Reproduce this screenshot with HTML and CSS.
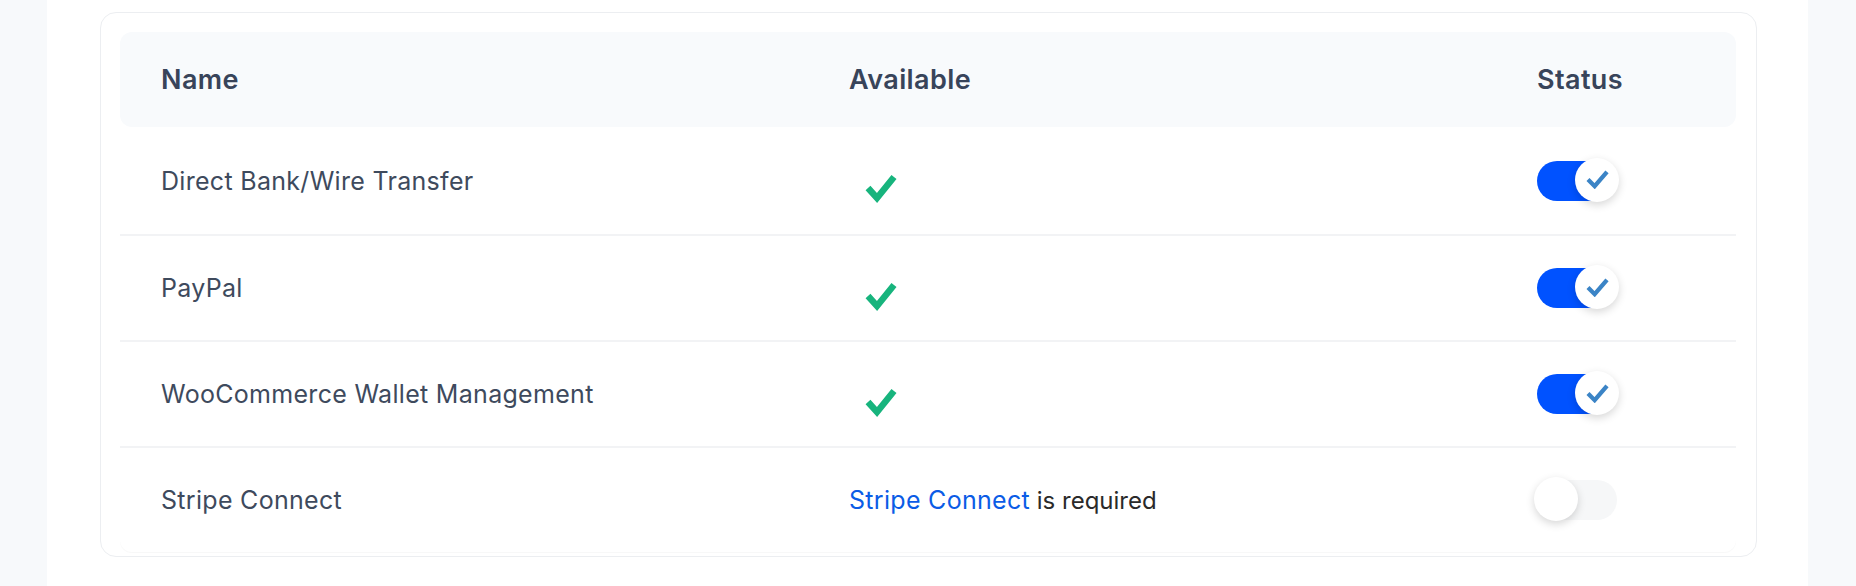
FILE: index.html
```html
<!DOCTYPE html>
<html>
<head>
<meta charset="utf-8">
<link rel="stylesheet" href="styles.css">
</head>
<body>
<div class="page">
  <aside class="strip"></aside>
  <main class="main">
    <section class="card">
      <div class="table">
        <div class="row head">
          <div class="cell">Name</div>
          <div class="cell">Available</div>
          <div class="cell">Status</div>
        </div>
        <div class="row">
          <div class="cell name">Direct Bank/Wire Transfer</div>
          <div class="cell"><svg class="ok" viewBox="0 0 32 30" width="32" height="30"><polyline points="3,14 12,24 29,3" fill="none" stroke="#17b47d" stroke-width="6.5" stroke-linejoin="miter"/></svg></div>
          <div class="cell"><span class="switch on"><span class="knob"><svg viewBox="0 0 24 20" width="23" height="19"><polyline points="2,10 9,17 22,2" fill="none" stroke="#3b84c6" stroke-width="4.5"/></svg></span></span></div>
        </div>
        <div class="row">
          <div class="cell name">PayPal</div>
          <div class="cell"><svg class="ok" viewBox="0 0 32 30" width="32" height="30"><polyline points="3,14 12,24 29,3" fill="none" stroke="#17b47d" stroke-width="6.5" stroke-linejoin="miter"/></svg></div>
          <div class="cell"><span class="switch on"><span class="knob"><svg viewBox="0 0 24 20" width="23" height="19"><polyline points="2,10 9,17 22,2" fill="none" stroke="#3b84c6" stroke-width="4.5"/></svg></span></span></div>
        </div>
        <div class="row">
          <div class="cell name">WooCommerce Wallet Management</div>
          <div class="cell"><svg class="ok" viewBox="0 0 32 30" width="32" height="30"><polyline points="3,14 12,24 29,3" fill="none" stroke="#17b47d" stroke-width="6.5" stroke-linejoin="miter"/></svg></div>
          <div class="cell"><span class="switch on"><span class="knob"><svg viewBox="0 0 24 20" width="23" height="19"><polyline points="2,10 9,17 22,2" fill="none" stroke="#3b84c6" stroke-width="4.5"/></svg></span></span></div>
        </div>
        <div class="row">
          <div class="cell name">Stripe Connect</div>
          <div class="cell req"><a class="link" href="#">Stripe Connect</a><span class="note"> is required</span></div>
          <div class="cell"><span class="switch off"><span class="knob"></span></span></div>
        </div>
      </div>
    </section>
  </main>
  <aside class="strip"></aside>
</div>
</body>
</html>
```
FILE: styles.css
```css
* { box-sizing: border-box; }
html, body { margin: 0; padding: 0; background: #ffffff; }
body { font-family: Inter, "Noto Sans", sans-serif; color: #3b4659; }

.page { display: flex; width: 1856px; height: 586px; }
.strip { width: 47px; flex: none; background: #f7f9fb; }
.strip:last-child { width: 48px; }
.main { flex: 1; padding: 12px 51px 0 53px; }

.card {
  border: 1px solid #eceef1;
  border-radius: 16px;
  padding: 19px 20px 0 19px;
  height: 545px;
}
.table {
  border-radius: 12px;
  box-shadow: 0 1px 1px rgba(0,0,0,0.03);
}
.row {
  display: grid;
  grid-template-columns: 688px 688px 1fr;
  padding-left: 41px;
  align-items: center;
  height: 106px;
  border-top: 2px solid #f2f3f5;
  font-size: 25px;
  letter-spacing: 0.3px;
}
.row.head {
  height: 95px;
  border-top: none;
  background: #f8fafc;
  border-radius: 12px;
  font-weight: 600;
  font-size: 27px;
  letter-spacing: 0.4px;
  color: #38445a;
}
.row.head + .row { border-top: none; height: 107px; }
.cell { display: flex; align-items: center; white-space: pre; }
.name { color: #3e4a5d; }
.ok { margin: 17px 0 0 16px; display: block; }

.req { color: #2a2a2a; }
.link { color: #0b5ce6; text-decoration: none; }
.note { font-size: 24px; letter-spacing: 0; }

.switch {
  position: relative;
  display: block;
  width: 80px;
  height: 40px;
  border-radius: 20px;
  background: #0052ff;
}
.switch.off { background: #f6f7f8; }
.knob {
  position: absolute;
  top: -3px;
  width: 44px;
  height: 44px;
  border-radius: 50%;
  background: #ffffff;
  box-shadow: 0 3px 8px rgba(0,0,0,0.16);
  display: flex;
  align-items: center;
  justify-content: center;
}
.switch.on .knob { right: -2px; }
.switch.off .knob { left: -3px; }
```
